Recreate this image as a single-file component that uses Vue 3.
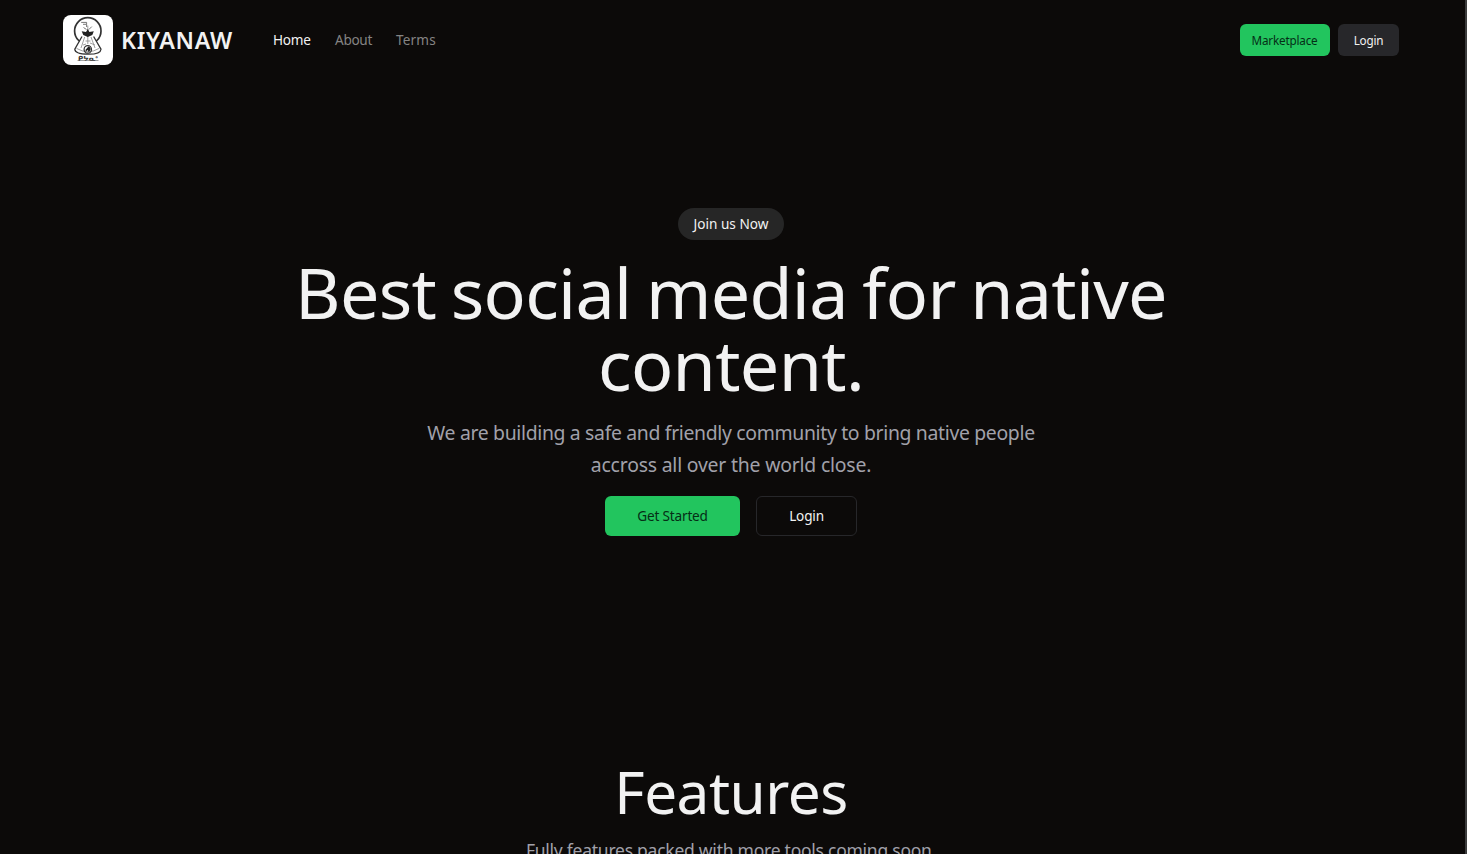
<script setup>
const links = [
  { label: 'Home', cls: 'home' },
  { label: 'About', cls: 'about' },
  { label: 'Terms', cls: 'terms' },
]
</script>

<template>
  <div class="page">
    <div class="content">
      <header class="bar">
        <div class="brand">
          <svg class="logo" viewBox="0 0 50 50" role="img" aria-label="Kiyanaw logo">
            <rect width="50" height="50" rx="8" fill="#fff" />
            <circle cx="24.8" cy="15.9" r="13.2" fill="none" stroke="#333" stroke-width="1.7" />
            <path d="M19 21.5 11.8 34.2Q12 39 24.8 39.2T38 34.2L30.6 21.5Z" fill="#fff" />
            <g fill="none" stroke="#333">
              <path d="M19 21.5 11.8 34.2Q12 39 24.8 39.2T38 34.2L30.6 21.5" stroke-width="1.3" />
              <path d="M13.5 33.4Q25 40 36.2 33.4" stroke-width=".8" stroke="#888" />
              <path d="M24.8 10.5V29M21.7 22 18 33M28 22l4 11M22.5 26h5M20 30l3-1M27 28l5 2" stroke-width=".8" stroke="#888" />
              <path d="M18.2 7.4h5.4v4.6M20 9.3h3M20.5 12.5l3 2M28.8 11.6l-3 3" stroke-width=".8" stroke="#555" />
              <circle cx="24.8" cy="34.4" r="3.7" stroke-width="1.2" />
            </g>
            <path d="M18.7 16.2 23 17l1.8-3 1.6 3 4.4-.8-1.5 3.8-4.5 2-4.5-2Z" fill="#222" />
            <path d="M25.3 31.4q3 .6 2.2 3.5l-1.8 2.4-.9-2.2-2.3 1.7q-.4-2.8 1.5-3.5Z" fill="#222" />
            <text x="25" y="45.6" text-anchor="middle" textLength="20" lengthAdjust="spacingAndGlyphs">ᑭᔭᓇᐤ</text>
            <path d="M14.5 45.5h21" stroke="#666" stroke-width=".6" />
          </svg>
          <span class="name"><span class="t">KIYANAW</span></span>
        </div>
        <nav class="nav">
          <a v-for="l in links" :key="l.label" :class="l.cls"><span class="t">{{ l.label }}</span></a>
        </nav>
        <div class="actions">
          <button class="btn small green market"><span class="t">Marketplace</span></button>
          <button class="btn small zinc"><span class="t">Login</span></button>
        </div>
      </header>

      <section class="hero">
        <a class="pill"><span class="t">Join us Now</span></a>
        <h1><span class="t l1">Best social media for native</span><br /><span class="t l2">content.</span></h1>
        <p class="lead"><span class="t l1">We are building a safe and friendly community to bring native people</span><br /><span class="t l2">accross all over the world close.</span></p>
        <div class="cta">
          <button class="btn large green start"><span class="t">Get Started</span></button>
          <button class="btn large outline"><span class="t">Login</span></button>
        </div>
      </section>

      <section class="features">
        <h2><span class="t">Features</span></h2>
        <p><span class="t">Fully features packed with more tools coming soon.</span></p>
      </section>
    </div>
    <div class="scroll"></div>
  </div>
</template>

<style>
body { margin: 0; background: #0c0a09; overflow: hidden; }
</style>

<style scoped>
.page {
  display: flex;
  justify-content: space-between;
  height: 854px;
  overflow: hidden;
  background: #0c0a09;
  color: #f2f2f2;
  font-family: "Noto Sans", sans-serif;
}
.content { width: 1462px; }
.scroll { width: 2px; background: #3c3c3c; }
.t { white-space: nowrap; }
.bar {
  display: flex;
  align-items: center;
  height: 80px;
  box-sizing: border-box;
  padding: 0 63px;
}
.brand { display: flex; align-items: center; gap: 8px; }
.logo { width: 50px; height: 50px; display: block; }
.logo text { font: 700 7px "DejaVu Sans", sans-serif; fill: #333; }
.name { width: 112px; font-size: 23.3px; font-weight: 600; line-height: 32px; letter-spacing: .65px; }
.nav { display: flex; gap: 24px; margin-left: 40px; font-size: 13.6px; line-height: 20px; }
.nav a { color: #858483; }
.nav .home { width: 38px; color: #f2f2f2; letter-spacing: -.25px; }
.nav .about { width: 37px; letter-spacing: -.3px; }
.nav .terms { width: 40px; letter-spacing: .15px; }
.actions { display: flex; gap: 8px; margin-left: auto; }
.btn {
  display: flex;
  align-items: center;
  justify-content: center;
  box-sizing: border-box;
  padding: 0 0 1px;
  border: 0;
  border-radius: 6px;
  font-family: inherit;
  font-weight: 400;
  letter-spacing: -.18px;
}
.small { height: 32px; width: 61px; font-size: 11.7px; }
.market { width: 90px; padding-right: 1px; }
.green { background: #22c55e; color: #052e16; }
.zinc { background: #27272a; color: #f2f2f2; }
.hero { display: flex; flex-direction: column; align-items: center; padding-top: 128px; text-align: center; }
.pill {
  display: flex;
  align-items: center;
  justify-content: center;
  width: 106px;
  height: 32px;
  box-sizing: border-box;
  padding-bottom: 1px;
  border-radius: 16px;
  background: #262626;
  font-size: 13.6px;
}
h1 { margin: 16px 0 0; font-size: 70px; line-height: 72px; font-weight: 400; }
h1 .l1 { letter-spacing: -.7px; word-spacing: -2.9px; }
h1 .l2 { letter-spacing: -.65px; }
.lead { margin: 17px 0 0; font-size: 19.4px; line-height: 32px; color: #a1a1aa; }
.lead .l1 { letter-spacing: -.33px; }
.lead .l2 { letter-spacing: -.2px; }
.cta { display: flex; gap: 16px; margin-top: 15px; }
.large { height: 40px; width: 101px; font-size: 13.6px; }
.start { width: 135px; }
.outline { border: 1px solid #27272a; background: #0c0a09; color: #f2f2f2; }
.features { padding-top: 222px; text-align: center; }
h2 { margin: 0; font-size: 58.5px; line-height: 66px; font-weight: 400; letter-spacing: -.5px; }
.features p { margin: 13px 0 0; font-size: 17.5px; line-height: 27px; color: #a1a1aa; letter-spacing: -.25px; }
</style>
